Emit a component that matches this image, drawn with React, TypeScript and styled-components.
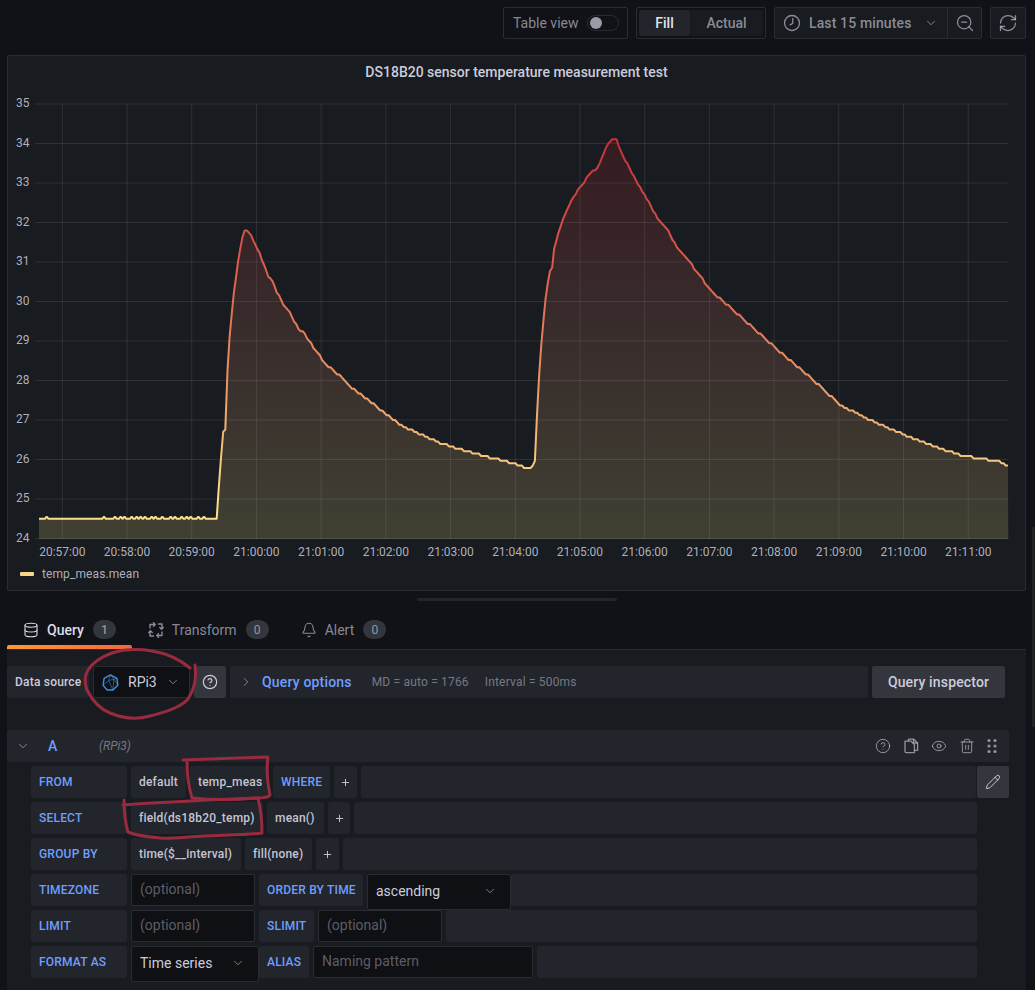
import React from "react";
import styled, { createGlobalStyle } from "styled-components";
import { Bell, ChevronDown, ChevronRight, CircleHelp, Database, Eye, Pencil, Plus, RefreshCw, Trash2, ZoomOut } from "lucide-react";

const colors = {
  canvas: "#111217",
  panel: "#181b1f",
  cell: "#22252b",
  button: "#33363c",
  border: "#2a2c32",
  input: "#0f1014",
  text: "#ccccdc",
  muted: "rgba(204, 204, 220, 0.65)",
  blue: "#6e9fff",
  ink: "#982b40",
};

const GlobalStyle = createGlobalStyle`
  html, body {
    margin: 0;
    padding: 0;
    background: ${colors.canvas};
    overflow: hidden;
  }
  * {
    box-sizing: border-box;
  }
`;

const Page = styled.div`
  position: relative;
  width: 1035px;
  height: 990px;
  overflow: hidden;
  padding: 7px 9px 0 7px;
  font-family: Roboto, "Liberation Sans", sans-serif;
  color: ${colors.text};
`;

const Toolbar = styled.div`
  display: flex;
  justify-content: flex-end;
  gap: 8px;
  height: 32px;
`;

const ToolBox = styled.div`
  display: flex;
  align-items: center;
  height: 32px;
  border: 1px solid ${colors.border};
  border-radius: 2px;
  background: ${colors.canvas};
`;

const TableView = styled(ToolBox)`
  width: 125px;
  padding-left: 9px;
  gap: 8px;
  font-size: 14px;
  color: ${colors.muted};
`;

const Switch = styled.span`
  display: flex;
  align-items: center;
  width: 32px;
  height: 16px;
  padding-left: 2px;
  border: 1px solid ${colors.border};
  border-radius: 8px;
  &::before {
    content: "";
    width: 12px;
    height: 12px;
    border-radius: 50%;
    background: #9a9aa8;
  }
`;

const FillGroup = styled(ToolBox)`
  width: 130px;
  padding: 2px;
`;

const FillOption = styled.span<{ $active?: boolean }>`
  display: flex;
  align-items: center;
  justify-content: center;
  height: 26px;
  width: ${(p) => (p.$active ? "51px" : "73px")};
  font-size: 14px;
  font-weight: 500;
  border-radius: 2px;
  color: ${(p) => (p.$active ? "#e4e4ee" : colors.muted)};
  background: ${(p) => (p.$active ? colors.cell : colors.panel)};
`;

const TimePicker = styled(ToolBox)`
  width: 208px;
  background: ${colors.panel};
  font-size: 14px;
  font-weight: 500;
  letter-spacing: 0.13px;
  color: ${colors.muted};
`;

const TimeRange = styled.div`
  display: flex;
  align-items: center;
  height: 100%;
  width: 173px;
  padding-left: 8px;
  gap: 8px;
  border-right: 1px solid ${colors.border};
  white-space: nowrap;
  svg:last-child {
    margin-left: 4px;
  }
`;

const IconButton = styled.div`
  flex: 1;
  display: flex;
  align-items: center;
  justify-content: center;
  color: ${colors.muted};
`;

const RefreshBox = styled(ToolBox)`
  width: 36px;
  background: ${colors.panel};
`;

const Panel = styled.section`
  height: 536px;
  margin-top: 16px;
  border: 1px solid ${colors.border};
  border-radius: 2px;
  background: ${colors.panel};
`;

const PanelTitle = styled.h2`
  margin: 0;
  height: 33px;
  padding-top: 8px;
  text-align: center;
  font-size: 14px;
  line-height: 16px;
  font-weight: 500;
  color: ${colors.text};
`;

const Chart = styled.svg`
  display: block;
  width: 1017px;
  height: 474px;
`;

const AxisLabel = styled.text`
  font-family: Roboto, "Liberation Sans", sans-serif;
  font-size: 12px;
  fill: rgba(204, 204, 220, 0.85);
`;

const Legend = styled.div`
  display: flex;
  align-items: center;
  gap: 8px;
  height: 20px;
  padding: 2px 0 0 12px;
  font-size: 12px;
  letter-spacing: 0.1px;
  color: rgba(204, 204, 220, 0.85);
`;

const LegendSwatch = styled.span`
  width: 14px;
  height: 4px;
  background: #f6d58a;
  border-radius: 1px;
`;

const Splitter = styled.div`
  display: flex;
  justify-content: center;
  height: 21px;
  padding-top: 7px;
  &::before {
    content: "";
    width: 200px;
    height: 3px;
    border-radius: 2px;
    background: ${colors.cell};
  }
`;

const Tabs = styled.nav`
  display: flex;
  height: 37px;
`;

const Tab = styled.div<{ $active?: boolean }>`
  position: relative;
  display: flex;
  align-items: center;
  padding: 0 16px 2px;
  gap: 8px;
  font-size: 14px;
  font-weight: ${(p) => (p.$active ? 500 : 400)};
  color: ${(p) => (p.$active ? "#dcdce8" : colors.muted)};
  ${(p) =>
    p.$active &&
    `&::after {
      content: "";
      position: absolute;
      left: 0;
      right: 0;
      bottom: 0;
      height: 4px;
      border-radius: 2px 2px 0 0;
      background: linear-gradient(90deg, #ff9830, #f5653e);
    }`}
`;

const Counter = styled.span`
  display: flex;
  align-items: center;
  justify-content: center;
  width: 23px;
  height: 19px;
  margin-left: 1px;
  border-radius: 10px;
  background: ${colors.button};
  font-size: 12px;
  color: ${colors.muted};
`;

const QueryPane = styled.section`
  height: 341px;
  padding-top: 16px;
  border-top: 1px solid ${colors.border};
  background: ${colors.panel};
`;

const SourceRow = styled.div`
  display: flex;
  align-items: center;
  gap: 4px;
  height: 32px;
  margin-right: 21px;
  margin-bottom: 32px;
`;

const SourceLabel = styled.div`
  display: flex;
  align-items: center;
  width: 82px;
  height: 32px;
  padding-left: 8px;
  border-radius: 2px;
  background: ${colors.cell};
  font-size: 12px;
  font-weight: 500;
  letter-spacing: 0.2px;
  white-space: nowrap;
`;

const SourceSelect = styled.div`
  display: flex;
  align-items: center;
  width: 97px;
  height: 32px;
  padding-left: 8px;
  gap: 9px;
  border: 1px solid ${colors.border};
  border-radius: 2px;
  background: ${colors.input};
  font-size: 14px;
  svg:last-child {
    color: ${colors.muted};
  }
`;

const HelpButton = styled.div`
  display: flex;
  align-items: center;
  justify-content: center;
  width: 32px;
  height: 32px;
  border-radius: 2px;
  background: ${colors.button};
`;

const OptionsBar = styled.div`
  flex: 1;
  display: flex;
  align-items: center;
  height: 32px;
  padding-left: 9px;
  border-radius: 2px;
  background: ${colors.cell};
  font-size: 12px;
  letter-spacing: 0.18px;
  color: rgba(204, 204, 220, 0.5);
`;

const OptionsTitle = styled.span`
  margin: 0 20px 0 9px;
  font-size: 14px;
  font-weight: 500;
  color: ${colors.blue};
`;

const OptionsInfo = styled.span`
  margin-right: 16px;
`;

const InspectorButton = styled.div`
  display: flex;
  align-items: center;
  justify-content: center;
  width: 133px;
  height: 32px;
  border-radius: 2px;
  background: ${colors.button};
  font-size: 14px;
  font-weight: 500;
  letter-spacing: 0.15px;
`;

const QueryHeader = styled.div`
  display: flex;
  align-items: center;
  width: 1002px;
  height: 32px;
  padding: 0 8px 0 9px;
  border-radius: 2px;
  background: ${colors.cell};
  color: ${colors.muted};
`;

const QueryLetter = styled.span`
  width: 51px;
  margin-left: 18px;
  font-size: 14px;
  font-weight: 500;
  color: ${colors.blue};
`;

const QuerySource = styled.span`
  flex: 1;
  font-size: 12px;
  font-style: italic;
  color: rgba(204, 204, 220, 0.5);
`;

const HeaderIcons = styled.div`
  display: flex;
  align-items: center;
  gap: 12px;
  margin-right: 1px;
  svg:last-child {
    margin-left: -3px;
  }
`;

const Rows = styled.div`
  display: flex;
  flex-direction: column;
  gap: 4px;
  width: 978px;
  margin: 4px 0 0 24px;
`;

const Row = styled.div<{ $edit?: boolean }>`
  display: flex;
  gap: 4px;
  height: 32px;
  padding-right: ${(p) => (p.$edit ? "0" : "32px")};
`;

const Cell = styled.div<{ $w: number }>`
  display: flex;
  align-items: center;
  flex: none;
  width: ${(p) => p.$w}px;
  height: 32px;
  padding-left: 8px;
  border-radius: 3px;
  background: ${colors.cell};
  font-size: 12px;
  font-weight: 500;
  letter-spacing: 0.2px;
  white-space: nowrap;
`;

const Keyword = styled(Cell)`
  color: ${colors.blue};
`;

const Plain = styled(Cell)`
  color: #c4c4d4;
`;

const AddCell = styled(Cell)`
  justify-content: center;
  padding: 0;
`;

const Filler = styled.div`
  flex: 1;
  height: 32px;
  border-radius: 3px;
  background: ${colors.cell};
`;

const Input = styled.div<{ $w: number }>`
  display: flex;
  align-items: center;
  flex: none;
  width: ${(p) => p.$w}px;
  height: 32px;
  padding: 0 0 2px 8px;
  border: 1px solid ${colors.border};
  border-radius: 2px;
  background: ${colors.input};
  font-size: 14px;
  color: rgba(204, 204, 220, 0.42);
`;

const Select = styled.div<{ $w: number }>`
  position: relative;
  display: flex;
  align-items: center;
  justify-content: space-between;
  flex: none;
  width: ${(p) => p.$w}px;
  height: 36px;
  margin-right: -4px;
  padding: 0 13px 2px 8px;
  border: 1px solid ${colors.border};
  border-radius: 2px;
  background: ${colors.input};
  font-size: 14px;
  color: ${colors.text};
  svg {
    color: ${colors.muted};
  }
`;

const EditButton = styled.div`
  display: flex;
  align-items: center;
  justify-content: center;
  flex: none;
  width: 32px;
  height: 32px;
  margin-left: -3px;
  border-radius: 2px;
  background: ${colors.button};
`;

const ScrollThumb = styled.div`
  position: absolute;
  top: 527px;
  right: 0;
  width: 3px;
  height: 200px;
  background: #202226;
`;

const Annotations = styled.svg`
  position: absolute;
  left: 0;
  top: 0;
  width: 1035px;
  height: 990px;
  pointer-events: none;
`;

const plot = { left: 39, right: 1008.3, bottom: 539, top: 104.5 };
const yFor = (v: number) => plot.bottom - (v - 24) * 39.5;
const gridX = Array.from({ length: 15 }, (_, i) => 62.3 + i * 64.71);
const timeLabels = [
  "20:57:00", "20:58:00", "20:59:00", "21:00:00", "21:01:00", "21:02:00", "21:03:00", "21:04:00",
  "21:05:00", "21:06:00", "21:07:00", "21:08:00", "21:09:00", "21:10:00", "21:11:00",
];

// baseline before the first heat-up, little one-step wobbles of the sensor
const wobbles = [46.7, 104, 115, 120.7, 124.5, 131.7, 136.7, 140.7, 145, 151.7, 155.5, 162.3, 170.7, 175, 181.7, 186.7, 190.7, 198.3, 204];
const curve: [number, number][] = [
  [216.7, 518.7], [220, 470], [223.3, 430], [225.7, 429.5], [226.7, 383], [229.3, 340], [233.3, 296.7], [238.3, 260],
  [241.7, 240], [244.3, 230.7], [246.7, 230], [251.7, 236.7], [255, 245], [259.3, 251.7], [261.7, 260], [265, 266.7],
  [268.3, 276.7], [271.7, 279], [276.7, 291.7], [285, 306.7], [290, 313.3], [298.3, 328.3], [305, 334.3], [315, 350],
  [326.7, 365], [340, 375.7], [350, 386.7], [372, 403], [400, 425], [440, 443], [470, 452], [500, 460], [520, 465.5],
  [530, 469.5], [535, 461.7], [538.3, 386.7], [541.7, 340], [545, 303], [549.3, 272.3], [551.7, 271.7], [554, 249.3],
  [558.3, 233.3], [563.3, 218.3], [571.7, 200], [581.7, 185], [590, 174], [598.3, 166.7], [606.7, 146], [611, 140],
  [613.3, 138.3], [616.7, 140], [620, 150], [631.7, 171.7], [638.3, 185], [645, 195], [658.3, 220], [668.3, 231.7],
  [673.3, 241.7], [686.7, 258.3], [701.7, 278.3], [711.7, 291.7], [720, 298.3], [750, 325], [780, 352], [810, 377],
  [840, 405], [870, 420], [900, 433], [930, 445], [960, 455], [990, 460], [1000, 462], [1008.3, 467],
];

const buildLine = () => {
  const pts: [number, number][] = [[plot.left, 518.7]];
  wobbles.forEach((x) => {
    pts.push([x - 1.6, 518.7], [x - 0.5, 517], [x + 0.5, 517], [x + 1.6, 518.7]);
  });
  let k = 0;
  for (let x = curve[0][0]; x <= curve[curve.length - 1][0]; x += 2.15) {
    while (curve[k + 1][0] < x) k++;
    const [x0, y0] = curve[k];
    const [x1, y1] = curve[k + 1];
    const y = y0 + ((x - x0) / (x1 - x0)) * (y1 - y0);
    pts.push([x, Math.abs(y1 - y0) / (x1 - x0) > 2 ? y : Math.round(y / 2.4) * 2.4]);
  }
  return pts.map(([x, y]) => `${x.toFixed(1)},${y.toFixed(1)}`).join(" L");
};

const line = "M" + buildLine();
const area = `${line} L${plot.right},${plot.bottom} L${plot.left},${plot.bottom} Z`;

const TemperatureChart = () => (
  <Chart viewBox="8 89 1017 474">
    <defs>
      <linearGradient id="tempLine" gradientUnits="userSpaceOnUse" x1="0" y1={yFor(34.2)} x2="0" y2={yFor(25)}>
        <stop offset="0" stopColor="#c4303a" />
        <stop offset="0.35" stopColor="#d85c4c" />
        <stop offset="0.65" stopColor="#ea8f62" />
        <stop offset="1" stopColor="#fbe08a" />
      </linearGradient>
      <linearGradient id="tempFill" gradientUnits="userSpaceOnUse" x1="0" y1={yFor(34.2)} x2="0" y2={yFor(24)}>
        <stop offset="0" stopColor="#c41e2c" stopOpacity="0.17" />
        <stop offset="0.5" stopColor="#cc7e68" stopOpacity="0.18" />
        <stop offset="1" stopColor="#e0d47e" stopOpacity="0.2" />
      </linearGradient>
    </defs>
    {Array.from({ length: 12 }, (_, i) => (
      <g key={i}>
        <line x1={35} x2={plot.right} y1={yFor(24 + i) - 0.5} y2={yFor(24 + i) - 0.5} stroke="rgba(240,250,255,0.1)" />
        <AxisLabel x={16} y={yFor(24 + i) + 2.5}>
          {24 + i}
        </AxisLabel>
      </g>
    ))}
    {gridX.map((x, i) => (
      <g key={x}>
        <line x1={x} x2={x} y1={plot.top - 0.5} y2={plot.bottom} stroke="rgba(240,250,255,0.1)" />
        <AxisLabel x={x} y={556} textAnchor="middle">
          {timeLabels[i]}
        </AxisLabel>
      </g>
    ))}
    <path d={area} fill="url(#tempFill)" />
    <path d={line} fill="none" stroke="url(#tempLine)" strokeWidth="2" strokeLinejoin="round" />
  </Chart>
);

const ClockIcon = () => (
  <svg width="18" height="18" viewBox="0 0 24 24" fill="none" stroke="currentColor" strokeWidth="1.7" strokeLinecap="round">
    <circle cx="12" cy="12" r="10" />
    <path d="M13 6v6.5l-3.5 2" />
  </svg>
);

const TransformIcon = () => (
  <svg width="16" height="16" viewBox="0 0 16 16" fill="none" stroke="currentColor" strokeWidth="1.4" strokeLinecap="round" strokeLinejoin="round">
    <path d="M2 6V2.5h3.5M10.5 2h3.5v3.5M14 10v3.5h-3.5M5.5 14H2v-3.5" />
    <path d="M5.5 .8l1.7 1.7-1.7 1.7M15.2 5.5l-1.7 1.7-1.7-1.7M10.5 15.2l-1.7-1.7 1.7-1.7M.8 10.5l1.7-1.7 1.7 1.7" />
  </svg>
);

const SourceIcon = () => (
  <svg width="17" height="17" viewBox="0 0 18 18" fill="none" stroke="#3d8fe0" strokeLinejoin="round">
    <path d="M9 1l6.8 3.6.9 7.2L11.6 17H5.4L1.2 12 2.2 4.6z" strokeWidth="1.5" />
    <path d="M9 1L7 7l5.5-1.5L15.8 4.6M7 7L1.2 12M7 7l4.6 10M12.5 5.5l4.2 6.3M9 1l3.5 4.5M12.5 5.5L11.6 17" strokeWidth="0.6" />
  </svg>
);

const CopyIcon = () => (
  <svg width="16" height="16" viewBox="0 0 16 16" fill="none" stroke="currentColor" strokeWidth="1.3" strokeLinejoin="round">
    <path d="M5.5 3V1.2h5.2L14.6 5v7.4h-3" />
    <path d="M10.5 1.2V5h4" />
    <path d="M2 3.2h6l3.4 3.4v8H3a1 1 0 0 1-1-1z" />
  </svg>
);

const GripIcon = () => (
  <svg width="16" height="16" viewBox="0 0 16 16" fill="currentColor">
    <circle cx="5" cy="2.5" r="1.6" />
    <circle cx="11" cy="2.5" r="1.6" />
    <circle cx="5" cy="8" r="1.6" />
    <circle cx="11" cy="8" r="1.6" />
    <circle cx="5" cy="13.5" r="1.6" />
    <circle cx="11" cy="13.5" r="1.6" />
  </svg>
);

const Chevron = () => <ChevronDown size={14} strokeWidth={1.5} />;

const Add = ({ w }: { w: number }) => (
  <AddCell $w={w}>
    <Plus size={11} strokeWidth={2} />
  </AddCell>
);

const App = () => (
  <Page>
    <GlobalStyle />
    <Toolbar>
      <TableView>
        Table view
        <Switch />
      </TableView>
      <FillGroup>
        <FillOption $active>Fill</FillOption>
        <FillOption>Actual</FillOption>
      </FillGroup>
      <TimePicker>
        <TimeRange>
          <ClockIcon />
          Last 15 minutes
          <Chevron />
        </TimeRange>
        <IconButton>
          <ZoomOut size={20} strokeWidth={1.5} />
        </IconButton>
      </TimePicker>
      <RefreshBox>
        <IconButton>
          <RefreshCw size={20} strokeWidth={1.5} />
        </IconButton>
      </RefreshBox>
    </Toolbar>

    <Panel>
      <PanelTitle>DS18B20 sensor temperature measurement test</PanelTitle>
      <TemperatureChart />
      <Legend>
        <LegendSwatch />
        temp_meas.mean
      </Legend>
    </Panel>

    <Splitter />

    <Tabs>
      <Tab $active>
        <Database size={16} strokeWidth={1.6} />
        Query
        <Counter>1</Counter>
      </Tab>
      <Tab>
        <TransformIcon />
        Transform
        <Counter>0</Counter>
      </Tab>
      <Tab>
        <Bell size={16} strokeWidth={1.6} />
        Alert
        <Counter>0</Counter>
      </Tab>
    </Tabs>

    <QueryPane>
      <SourceRow>
        <SourceLabel>Data source</SourceLabel>
        <SourceSelect>
          <SourceIcon />
          RPi3
          <Chevron />
        </SourceSelect>
        <HelpButton>
          <CircleHelp size={16} strokeWidth={1.8} />
        </HelpButton>
        <OptionsBar>
          <ChevronRight size={14} strokeWidth={1.5} color={colors.muted} />
          <OptionsTitle>Query options</OptionsTitle>
          <OptionsInfo>MD = auto = 1766</OptionsInfo>
          <OptionsInfo>Interval = 500ms</OptionsInfo>
        </OptionsBar>
        <InspectorButton>Query inspector</InspectorButton>
      </SourceRow>

      <QueryHeader>
        <Chevron />
        <QueryLetter>A</QueryLetter>
        <QuerySource>(RPi3)</QuerySource>
        <HeaderIcons>
          <CircleHelp size={16} strokeWidth={1.5} />
          <CopyIcon />
          <Eye size={16} strokeWidth={1.5} />
          <Trash2 size={16} strokeWidth={1.5} />
          <GripIcon />
        </HeaderIcons>
      </QueryHeader>

      <Rows>
        <Row $edit>
          <Keyword $w={96}>FROM</Keyword>
          <Plain $w={55}>default</Plain>
          <Plain $w={79}>temp_meas</Plain>
          <Keyword $w={57}>WHERE</Keyword>
          <Add w={23} />
          <Filler />
          <EditButton>
            <Pencil size={16} strokeWidth={1.5} />
          </EditButton>
        </Row>
        <Row>
          <Keyword $w={96}>SELECT</Keyword>
          <Plain $w={132}>field(ds18b20_temp)</Plain>
          <Plain $w={57}>mean()</Plain>
          <Add w={22} />
          <Filler />
        </Row>
        <Row>
          <Keyword $w={96}>GROUP BY</Keyword>
          <Plain $w={110}>time($__interval)</Plain>
          <Plain $w={67}>fill(none)</Plain>
          <Add w={23} />
          <Filler />
        </Row>
        <Row>
          <Keyword $w={96}>TIMEZONE</Keyword>
          <Input $w={124}>(optional)</Input>
          <Keyword $w={104}>ORDER BY TIME</Keyword>
          <Select $w={144}>
            ascending
            <Chevron />
          </Select>
          <Filler />
        </Row>
        <Row>
          <Keyword $w={96}>LIMIT</Keyword>
          <Input $w={124}>(optional)</Input>
          <Keyword $w={55}>SLIMIT</Keyword>
          <Input $w={124}>(optional)</Input>
          <Filler />
        </Row>
        <Row>
          <Keyword $w={96}>FORMAT AS</Keyword>
          <Select $w={128}>
            Time series
            <Chevron />
          </Select>
          <Keyword $w={50}>ALIAS</Keyword>
          <Input $w={220}>Naming pattern</Input>
          <Filler />
        </Row>
      </Rows>
    </QueryPane>

    <ScrollThumb />

    <Annotations viewBox="0 0 1035 990" fill="none" stroke={colors.ink} strokeWidth="3" strokeLinecap="round" strokeLinejoin="round">
      <path d="M195 665C197 678 194 690 188 699C180 708 165 712 150 716C136 720 122 718 110 713C100 709 92 700 87 690C84 682 85 675 88 670C93 662 101 657 112 653C125 649 140 649 152 651C165 653 178 658 190 668" />
      <path d="M183 760C205 759 240 758 268 757C266 770 268 785 270 795C268 798 262 798 256 798C235 800 212 800 192 798C188 785 187 772 187 761" />
      <path d="M123 805C150 803 210 800 258 798C261 810 262 822 262 833C245 835 225 835 205 836C185 837 170 839 160 838C148 837 135 835 128 832C125 822 124 812 124 800" />
    </Annotations>
  </Page>
);

export default App;
